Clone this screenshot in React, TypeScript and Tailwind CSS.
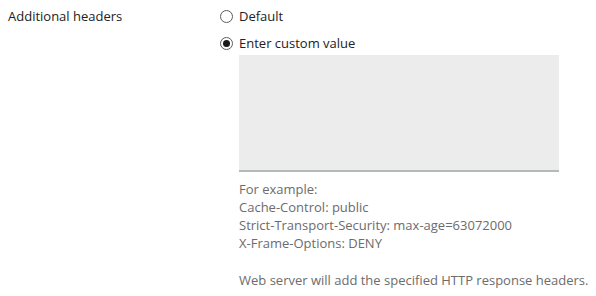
const Radio = ({ checked, label }: { checked?: boolean; label: string }) => {
  return (
    <label className="flex items-center gap-[6px] h-[18px]">
      <span className="w-[13px] h-[13px] rounded-full border border-[#5c5c5c] bg-white flex items-center justify-center">
        {checked && <span className="w-[7px] h-[7px] rounded-full bg-[#1a1a1a]" />}
      </span>
      <span>{label}</span>
    </label>
  );
};

const App = () => {
  return (
    <div className="bg-white w-[596px] h-[296px] font-['Open_Sans',sans-serif] text-[13px] text-[#222] leading-[18px]">
      <div className="flex pt-[7px] pl-[8px]">
        <div className="w-[212px]">Additional headers</div>
        <div className="flex flex-col">
          <Radio label="Default" />
          <div className="mt-[9px]">
            <Radio checked label="Enter custom value" />
          </div>
          <div className="ml-[19px] mt-[3px]">
            <textarea className="block w-[320px] h-[117px] bg-[#ececec] border-b-2 border-[#b3b8bb] outline-none resize-none" />
            <div className="text-[#6c6c6c] mt-[8px] leading-[18px]">
              <p>For example:</p>
              <p>Cache-Control: public</p>
              <p>Strict-Transport-Security: max-age=63072000</p>
              <p>X-Frame-Options: DENY</p>
              <p className="mt-[19px]">Web server will add the specified HTTP response headers.</p>
            </div>
          </div>
        </div>
      </div>
    </div>
  );
};

export default App;
